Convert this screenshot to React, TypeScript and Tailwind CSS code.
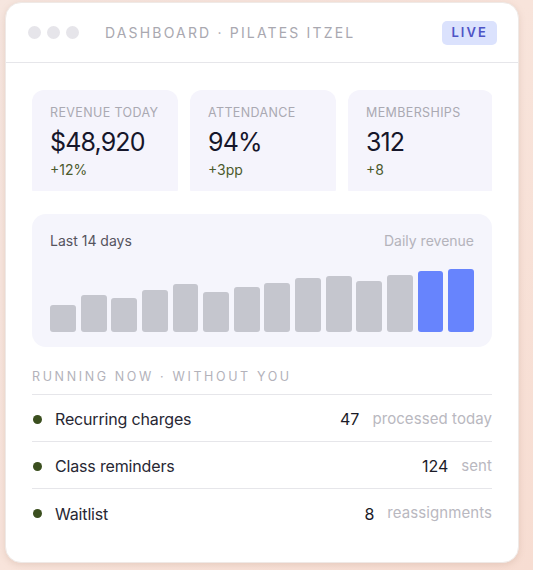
import React from "react";

const bars = [27, 37, 34, 42, 48, 40, 45, 49, 54, 56, 51, 57, 61, 63];

const stats = [
  { label: "REVENUE TODAY", value: "$48,920", delta: "+12%" },
  { label: "ATTENDANCE", value: "94%", delta: "+3pp" },
  { label: "MEMBERSHIPS", value: "312", delta: "+8" },
];

const rows = [
  { label: "Recurring charges", n: "47", unit: "processed today" },
  { label: "Class reminders", n: "124", unit: "sent" },
  { label: "Waitlist", n: "8", unit: "reassignments" },
];

export default function App() {
  return (
    <div
      className="w-[533px] h-[570px] overflow-hidden bg-gradient-to-br from-[#f6e6df] via-[#f8e4db] to-[#f7ddd2] pt-[2px] pl-[5px]"
      style={{ fontFamily: "Inter, 'Noto Sans', sans-serif" }}
    >
      <div className="w-[514px] h-[561px] bg-white rounded-[16px] shadow-[0_2px_6px_rgba(180,140,120,0.25)] border border-[#efe9e6] flex flex-col">
        <div className="h-[60px] flex items-center justify-between pl-[22px] pr-[21px] border-b border-[#e6e6ea]">
          <div className="flex items-center">
            <div className="flex gap-[6px]">
              <span className="w-[13px] h-[13px] rounded-full bg-[#e6e5ea]" />
              <span className="w-[13px] h-[13px] rounded-full bg-[#e6e5ea]" />
              <span className="w-[13px] h-[13px] rounded-full bg-[#e6e5ea]" />
            </div>
            <span className="ml-[26px] text-[14px] tracking-[0.155em] text-[#a9a8b0]">
              DASHBOARD · PILATES ITZEL
            </span>
          </div>
          <span className="h-[24px] px-[9px] flex items-center rounded-[5px] bg-[#dbe2fd] text-[#4e54c6] text-[13px] font-semibold tracking-[0.16em]">
            LIVE
          </span>
        </div>

        <div className="pl-[26px] pr-[26px] pt-[27px]">
          <div className="h-[101px] overflow-hidden flex gap-[12px]">
            {stats.map((s) => (
              <div
                key={s.label}
                className="w-[146px] shrink-0 h-[110px] rounded-[12px] bg-[#f5f4fc] pl-[18px] pt-[15px]"
              >
                <div className="text-[12.5px] text-[#aaa9b2] tracking-[0.03em] leading-[16px]">{s.label}</div>
                <div className="text-[25px] text-[#16162a] leading-[32px] mt-[5px] tracking-[-0.035em]">{s.value}</div>
                <div className="text-[14px] text-[#4b5a2c] leading-[18px] mt-[3px]">{s.delta}</div>
              </div>
            ))}
          </div>

          <div className="mt-[23px] h-[133px] rounded-[14px] bg-[#f5f5fc] px-[18px] pt-[18px]">
            <div className="flex justify-between text-[14px] leading-[18px]">
              <span className="text-[#55545e]">Last 14 days</span>
              <span className="text-[#b4b3bb]">Daily revenue</span>
            </div>
            <div className="mt-[9px] h-[73px] flex items-end gap-[4.7px]">
              {bars.map((h, i) => (
                <div
                  key={i}
                  className={`flex-1 rounded-[3px] ${i >= 12 ? "bg-[#6784fd]" : "bg-[#c5c6ce]"}`}
                  style={{ height: h }}
                />
              ))}
            </div>
          </div>

          <div className="mt-[22px] text-[12.5px] tracking-[0.21em] text-[#b3b2ba] leading-[16px]">
            RUNNING NOW · WITHOUT YOU
          </div>
          <div className="mt-[9px] border-t border-[#e6e6ea]">
            {rows.map((r, i) => (
              <div
                key={r.label}
                className={`h-[47px] pt-[2px] flex items-center ${i < rows.length - 1 ? "border-b border-[#e6e6ea]" : ""}`}
              >
                <span className="w-[9px] h-[9px] rounded-full bg-[#3b4f1f] ml-[1px]" />
                <span className="ml-[13px] text-[16px] tracking-[-0.01em] text-[#272733]">{r.label}</span>
                <span className="ml-auto text-[16px] text-[#1b1b28]">{r.n}</span>
                <span className="ml-[13px] text-[15px] tracking-[0.005em] text-[#b9b8c0]">{r.unit}</span>
              </div>
            ))}
          </div>
        </div>
      </div>
    </div>
  );
}
